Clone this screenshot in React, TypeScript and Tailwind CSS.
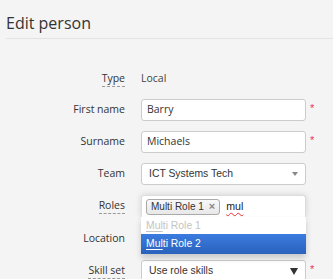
import React from "react";

const labelFont = { fontFamily: '"Open Sans", "Noto Sans", sans-serif' };

function Label({ children, abbr }: { children: React.ReactNode; abbr?: boolean }) {
  return (
    <div className="w-[125px] shrink-0 text-right text-[10.5px] text-[#333] pr-0">
      <span className={abbr ? "border-b border-dashed border-[#999] pb-[1px]" : ""}>{children}</span>
    </div>
  );
}

function Star() {
  return <span className="ml-[4px] text-[#ee3355] text-[11px] leading-none -mt-[4px] font-[Liberation_Sans]">*</span>;
}

export default function App() {
  return (
    <div className="w-[333px] h-[279px] bg-[#f4f4f4] overflow-hidden relative" style={labelFont}>
      <div className="ml-[6px] pt-[12px] pb-[4px] border-b border-[#e3e3e3]">
        <div className="text-[16px] leading-[22px] text-[#333]">Edit person</div>
      </div>

      <div className="flex flex-col mt-[29px]">
        {/* Type */}
        <div className="flex items-center h-[22px]">
          <Label abbr>Type</Label>
          <div className="ml-[16px] text-[10.5px] text-[#444]">Local</div>
        </div>

        {/* First name */}
        <div className="flex items-center h-[22px] mt-[9px]">
          <Label>First name</Label>
          <div className="ml-[16px] w-[165px] h-[22px] bg-white border border-[#ccc] rounded-[3px] px-[5px] flex items-center text-[10.5px] text-[#333]">
            Barry
          </div>
          <Star />
        </div>

        {/* Surname */}
        <div className="flex items-center h-[22px] mt-[10px]">
          <Label>Surname</Label>
          <div className="ml-[16px] w-[165px] h-[22px] bg-white border border-[#ccc] rounded-[3px] px-[5px] flex items-center text-[10.5px] text-[#333]">
            Michaels
          </div>
          <Star />
        </div>

        {/* Team */}
        <div className="flex items-center h-[22px] mt-[10px]">
          <Label>Team</Label>
          <div
            className="ml-[16px] w-[165px] h-[22px] bg-white border border-[#ccc] rounded-[3px] pl-[7px] pr-[6px] flex items-center justify-between text-[10.4px] text-[#333]"
            style={{ fontFamily: '"Liberation Sans", Arial, sans-serif' }}
          >
            <span>ICT Systems Tech</span>
            <span className="w-0 h-0 border-l-[3.5px] border-r-[3.5px] border-t-[4px] border-l-transparent border-r-transparent border-t-[#888] mr-[1px]" />
          </div>
        </div>

        {/* Roles */}
        <div className="flex items-center h-[22px] mt-[10px] relative z-10">
          <Label abbr>Roles</Label>
          <div className="ml-[16px] w-[165px] relative" style={{ fontFamily: '"Liberation Sans", Arial, sans-serif' }}>
            <div className="h-[22px] bg-white border border-[#ddd] border-b-0 rounded-t-[3px] shadow-[0_0_6px_rgba(0,0,0,0.15)] flex items-center pl-[4px]">
              <div className="h-[16px] flex items-center pl-[4px] pr-[4px] border border-[#aaa] rounded-[3px] bg-gradient-to-b from-[#f8f8f8] to-[#e8e8e8] text-[10px] text-[#333]">
                <span>Multi Role 1</span>
                <span className="ml-[5px] text-[#888] text-[11px] font-bold leading-none">×</span>
              </div>
              <span className="ml-[6px] text-[10.6px] text-[#222] underline decoration-wavy decoration-[#e33] decoration-[1px] underline-offset-[2px]">
                mul
              </span>
            </div>
            <div className="absolute left-0 top-[22px] w-[165px] bg-white shadow-[0_4px_6px_rgba(0,0,0,0.18)] text-[10.4px] pb-0">
              <div className="h-[17px] flex items-center pl-[5px] text-[#c4c4c4]">
                <span className="underline underline-offset-[2px]">Mul</span>
                <span>ti Role 1</span>
              </div>
              <div className="h-[20px] flex items-center pl-[5px] text-white bg-gradient-to-b from-[#3b7be0] to-[#2a62bc]">
                <span className="underline underline-offset-[2px]">Mul</span>
                <span>ti Role 2</span>
              </div>
            </div>
          </div>
        </div>

        {/* Location */}
        <div className="flex items-center h-[22px] mt-[11px]">
          <Label>Location</Label>
          <div className="ml-[16px] w-[165px] h-[22px]" />
        </div>

        {/* Skill set */}
        <div className="flex items-center h-[22px] mt-[10px]">
          <Label abbr>Skill set</Label>
          <div
            className="ml-[16px] w-[165px] h-[22px] bg-white border border-[#ccc] rounded-[3px] pl-[7px] pr-[6px] flex items-center justify-between text-[10.4px] text-[#333]"
            style={{ fontFamily: '"Liberation Sans", Arial, sans-serif' }}
          >
            <span>Use role skills</span>
            <span className="w-0 h-0 border-l-[4px] border-r-[4px] border-t-[7px] border-l-transparent border-r-transparent border-t-[#333] mr-[1px]" />
          </div>
          <Star />
        </div>
      </div>
    </div>
  );
}
